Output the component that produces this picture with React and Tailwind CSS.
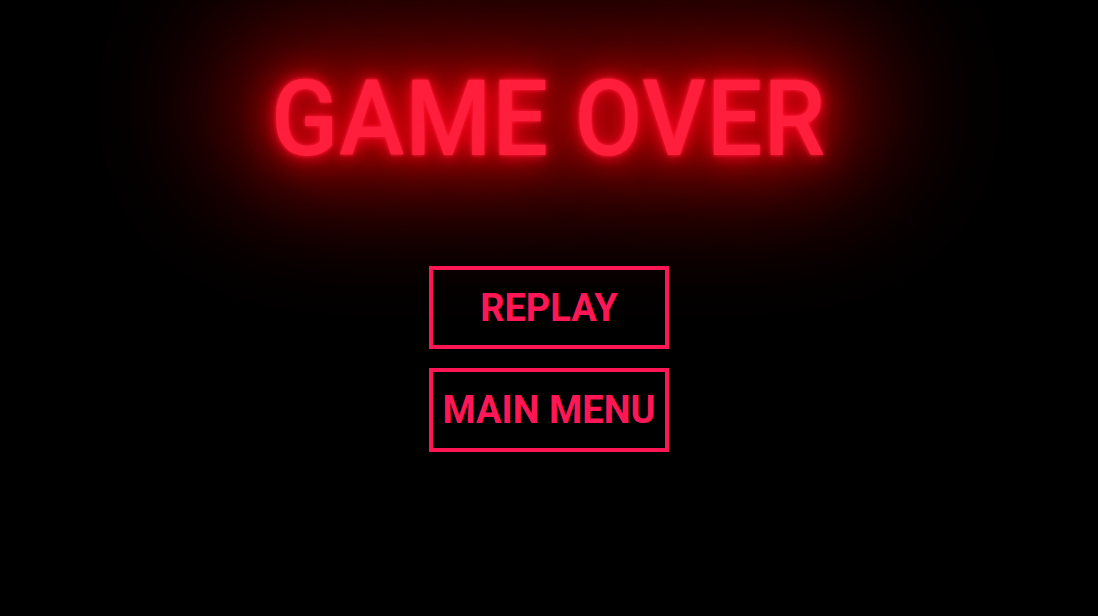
export default function App() {
  return (
    <div className="min-h-screen w-full bg-black flex flex-col items-center pt-[66px] font-['Roboto',sans-serif] overflow-hidden">
      {/* neon title with a soft red haze behind it */}
      <div className="relative">
        <div className="absolute -left-[50px] -right-[50px] -top-[60px] -bottom-[30px] rounded-full bg-[#4a0000] blur-[60px]" />
        <h1 className="relative text-[106px] leading-none font-medium tracking-[1px] scale-x-[0.93] text-[#ff1f3c] [text-shadow:0_0_4px_#ff1f3c,0_0_14px_#ff0022,0_0_35px_#ff0010,0_0_70px_#e00000,0_0_120px_#c00000]">
          GAME OVER
        </h1>
      </div>

      <div className="relative mt-[94px] flex flex-col gap-[19px]">
        <button className="w-[240px] h-[83px] border-4 border-[#ff1755] text-[#ff1755] text-[38px] font-bold leading-none flex items-center justify-center">
          REPLAY
        </button>
        <button className="w-[240px] h-[84px] border-4 border-[#ff1755] text-[#ff1755] text-[38px] font-bold leading-none flex items-center justify-center">
          MAIN MENU
        </button>
      </div>
    </div>
  );
}
